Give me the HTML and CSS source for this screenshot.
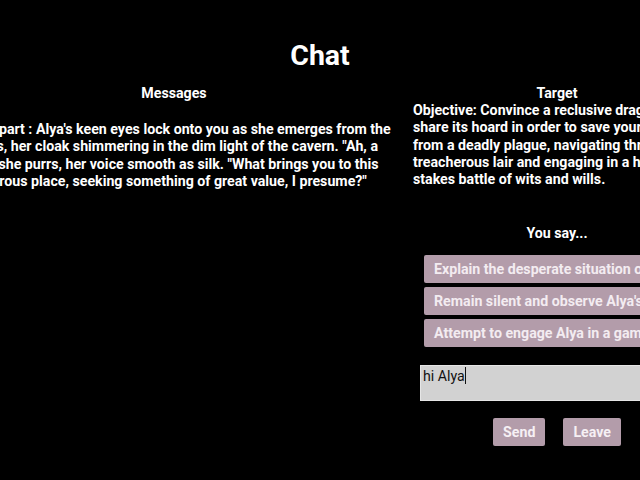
FILE: index.html
```html
<!DOCTYPE html>
<html lang="en">
<head>
<meta charset="utf-8">
<title>Chat</title>
<link rel="stylesheet" href="styles.css">
</head>
<body>
<div class="page">
  <h1 class="title">Chat</h1>
  <div class="columns">
    <section class="messages">
      <h2 class="heading">Messages</h2>
      <p class="message">Other part : Alya's keen eyes lock onto you as she emerges from the depths, her cloak shimmering in the dim light of the cavern. "Ah, a hero," she purrs, her voice smooth as silk. "What brings you to this dangerous place, seeking something of great value, I presume?"</p>
    </section>
    <section class="target">
      <h2 class="heading">Target</h2>
      <p class="objective">Objective: Convince a reclusive dragon to share its hoard in order to save your village from a deadly plague, navigating through its treacherous lair and engaging in a high-stakes battle of wits and wills.</p>
      <h2 class="heading say">You say...</h2>
      <div class="options">
        <button class="option">Explain the desperate situation of your village and plead for help</button>
        <button class="option">Remain silent and observe Alya's reaction carefully</button>
        <button class="option">Attempt to engage Alya in a game of riddles</button>
      </div>
      <div class="input-box">hi Alya<span class="caret"></span></div>
      <div class="actions">
        <button class="action">Send</button>
        <button class="action">Leave</button>
      </div>
    </section>
  </div>
</div>
</body>
</html>
```
FILE: styles.css
```css
html, body {
  margin: 0;
  background: #000;
  color: #fff;
  font-family: Roboto, "Noto Sans", sans-serif;
}

body {
  display: flex;
  justify-content: center;
  overflow: hidden;
  height: 480px;
}

.page {
  flex-shrink: 0;
  width: 762px;
  display: flex;
  flex-direction: column;
}

.title {
  margin: 39px 0 0;
  font-size: 28.5px;
  line-height: 34px;
  font-weight: 700;
  text-align: center;
}

.columns {
  margin-top: 12px;
  display: grid;
  grid-template-columns: 470px 288px;
  column-gap: 4px;
}

.heading {
  margin: 0;
  font-size: 14.2px;
  line-height: 17px;
  font-weight: 700;
  text-align: center;
}

.messages {
  padding: 0 10px 0 21px;
}

.messages .heading {
  margin-left: -11px;
}

.message {
  margin: 19px 0 0;
  font-size: 14.2px;
  line-height: 17.3px;
  font-weight: 700;
}

.target {
  display: flex;
  flex-direction: column;
}

.objective {
  margin: 0;
  font-size: 14.2px;
  line-height: 17.3px;
  font-weight: 700;
}

.say {
  margin-top: 37px;
}

.options {
  margin: 13px 11px 0 11px;
  display: flex;
  flex-direction: column;
  gap: 4px;
}

.option {
  height: 28px;
  padding: 0 10px;
  border: 0;
  border-radius: 2px;
  background: #b39caa;
  color: #f3ecf1;
  font-family: inherit;
  font-size: 14.2px;
  font-weight: 700;
  text-align: left;
  white-space: nowrap;
  overflow: hidden;
}

.input-box {
  margin: 18px 7px 0 7px;
  height: 33px;
  padding: 1px 2px 0;
  background: #d2d2d2;
  border: 1px solid #e6e6e6;
  color: #111;
  font-size: 14.2px;
  line-height: 18px;
}

.caret {
  display: inline-block;
  width: 1px;
  height: 17px;
  background: #111;
  vertical-align: -3px;
}

.actions {
  margin-top: 17px;
  display: flex;
  justify-content: center;
  gap: 18px;
}

.action {
  height: 28px;
  padding: 0 10px;
  border: 0;
  border-radius: 2px;
  background: #b39caa;
  color: #f6f0f4;
  font-family: inherit;
  font-size: 14.2px;
  font-weight: 700;
}
```
